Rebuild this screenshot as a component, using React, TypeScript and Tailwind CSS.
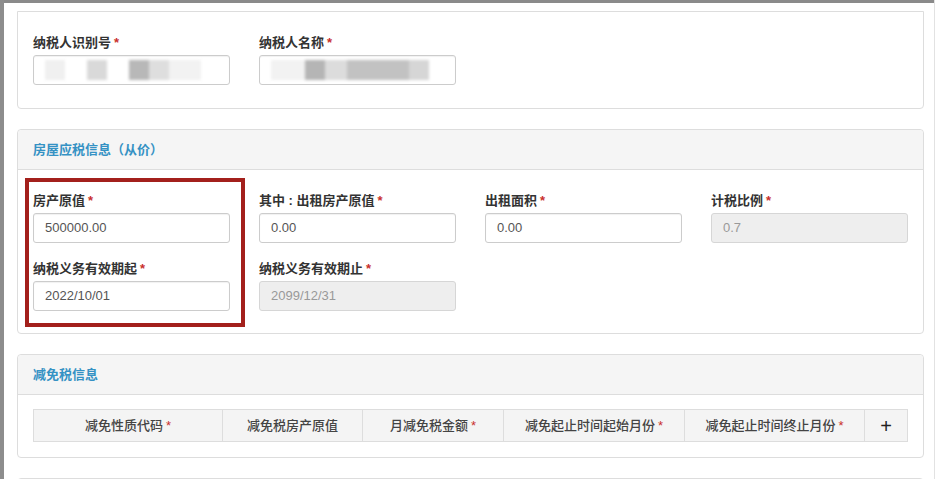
const font = { fontFamily: '"Liberation Sans", "Noto Sans CJK SC", sans-serif' };

function Star() {
  return <span className="ml-[3px] text-[#c9302c]">*</span>;
}

function Field({
  label,
  value,
  disabled,
  blurred,
}: {
  label: string;
  value?: string;
  disabled?: boolean;
  blurred?: 'id' | 'name';
}) {
  return (
    <div className="flex flex-col">
      <div className="h-[20px] text-[13px] font-bold leading-[20px] text-[#333]">
        {label}
        <Star />
      </div>
      <div
        className={
          'mt-[2px] flex h-[30px] items-center rounded-[3px] border px-[11px] text-[13px] ' +
          (disabled
            ? 'border-[#d6d6d6] bg-[#eeeeee] text-[#999]'
            : 'border-[#cccccc] bg-white text-[#555] shadow-[inset_0_1px_1px_rgba(0,0,0,0.06)]')
        }
      >
        {blurred === 'id' && (
          <div className="flex items-center blur-[1.5px]">
            <div className="h-[20px] w-[20px] bg-[#f0f0f0]" />
            <div className="ml-[22px] h-[20px] w-[20px] bg-[#d9d9d9]" />
            <div className="ml-[22px] h-[20px] w-[20px] bg-[#b8b8b8]" />
            <div className="h-[20px] w-[20px] bg-[#dedede]" />
            <div className="h-[20px] w-[32px] bg-[#f2f2f2]" />
          </div>
        )}
        {blurred === 'name' && (
          <div className="flex items-center blur-[1.5px]">
            <div className="h-[20px] w-[34px] bg-[#f2f2f2]" />
            <div className="h-[20px] w-[20px] bg-[#b5b5b5]" />
            <div className="h-[20px] w-[22px] bg-[#dcdcdc]" />
            <div className="h-[20px] w-[62px] bg-[#c2c2c2]" />
            <div className="h-[20px] w-[20px] bg-[#d6d6d6]" />
          </div>
        )}
        {value}
      </div>
    </div>
  );
}

function PanelHeader({ title }: { title: string }) {
  return (
    <div className="flex h-[40px] items-center rounded-t-[4px] border-b border-[#dddddd] bg-[#f5f5f5] px-[15px] text-[13px] font-bold text-[#3592c4]">
      {title}
    </div>
  );
}

const cols = [
  { label: '减免性质代码', w: 'w-[189px]', star: true },
  { label: '减免税房产原值', w: 'w-[140px]', star: false },
  { label: '月减免税金额', w: 'w-[141px]', star: true },
  { label: '减免起止时间起始月份', w: 'w-[181px]', star: true },
  { label: '减免起止时间终止月份', w: 'w-[180px]', star: true },
];

export default function App() {
  return (
    <div className="flex h-[479px] w-[935px] overflow-hidden bg-white" style={font}>
      <div className="w-[4px] shrink-0 bg-[#8d8d8d]" />
      <div className="flex flex-1 flex-col border-r border-[#e2e2e2]">
        <div className="h-[3px] shrink-0 bg-[#8a8a8a]" />
        <div className="flex flex-col gap-[20px] pl-[13px] pr-[10px] pt-[8px]">
          {/* 纳税人 */}
          <div className="rounded-b-[4px] border border-[#dddddd] px-[15px] pb-[23px] pt-[21px]">
            <div className="grid grid-cols-[197px_197px] gap-x-[29px]">
              <Field label="纳税人识别号" blurred="id" />
              <Field label="纳税人名称" blurred="name" />
            </div>
          </div>

          {/* 房屋应税信息 */}
          <div className="rounded-[4px] border border-[#dddddd]">
            <PanelHeader title="房屋应税信息（从价）" />
            <div className="relative px-[15px] pb-[22px] pt-[21px]">
              <div className="grid grid-cols-[197px_197px_197px_197px] gap-x-[29px] gap-y-[16px]">
                <Field label="房产原值" value="500000.00" />
                <Field label="其中 : 出租房产原值" value="0.00" />
                <Field label="出租面积" value="0.00" />
                <Field label="计税比例" value="0.7" disabled />
                <Field label="纳税义务有效期起" value="2022/10/01" />
                <Field label="纳税义务有效期止" value="2099/12/31" disabled />
              </div>
              <div className="pointer-events-none absolute left-[7px] top-[8px] h-[149px] w-[220px] border-[4px] border-[#a3201c]" />
            </div>
          </div>

          {/* 减免税信息 */}
          <div className="rounded-[4px] border border-[#dddddd]">
            <PanelHeader title="减免税信息" />
            <div className="px-[15px] pb-[15px] pt-[14px]">
              <div className="flex h-[33px] w-[875px] border border-[#dddddd] bg-[#f4f4f4] text-[13px] font-medium text-[#444]">
                {cols.map((c) => (
                  <div
                    key={c.label}
                    className={c.w + ' flex items-center justify-center border-r border-[#dddddd]'}
                  >
                    {c.label}
                    {c.star && <Star />}
                  </div>
                ))}
                <div className="flex flex-1 items-center justify-center text-[20px] font-normal leading-none text-[#222]">
                  +
                </div>
              </div>
            </div>
          </div>

          <div className="h-[20px] rounded-t-[4px] border border-[#dddddd]" />
        </div>
      </div>
    </div>
  );
}
